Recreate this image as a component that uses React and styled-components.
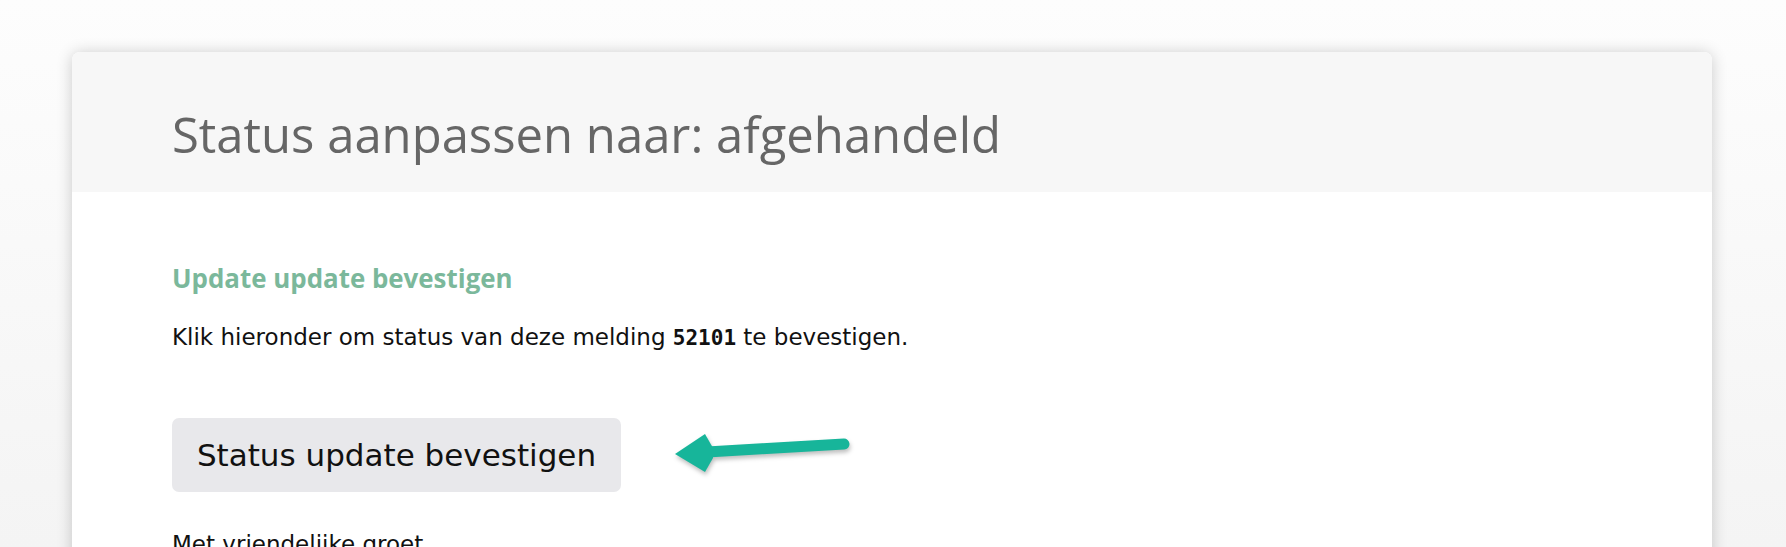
import React from "react";
import styled, { createGlobalStyle } from "styled-components";

const GlobalStyle = createGlobalStyle`
  html, body {
    margin: 0;
    padding: 0;
    height: 100%;
    overflow: hidden;
  }
  body {
    background: linear-gradient(to bottom, #fdfdfd 0%, #f4f4f4 100%);
    font-family: "DejaVu Sans", Arial, sans-serif;
  }
`;

const Page = styled.div`
  padding: 52px 74px 0 72px;
`;

const Card = styled.div`
  width: 1640px;
  background: #fff;
  border-radius: 8px;
  box-shadow: 0 1px 16px rgba(0, 0, 0, 0.2);
  overflow: hidden;
`;

const Header = styled.div`
  height: 140px;
  background: #f7f7f7;
  padding: 0 100px;
  display: flex;
  align-items: center;
  box-sizing: border-box;
`;

const Title = styled.h1`
  margin: 24px 0 0;
  font-family: "Open Sans", sans-serif;
  font-weight: 400;
  font-size: 49px;
  color: #666666;
`;

const Content = styled.div`
  padding: 70px 100px 40px;
`;

const SubTitle = styled.h2`
  margin: 0;
  font-family: "Open Sans", sans-serif;
  font-weight: 700;
  font-size: 25.9px;
  line-height: 32px;
  color: #7bb89b;
`;

const Text = styled.p`
  margin: ${(p) => p.top || 0}px 0 0;
  font-family: "DejaVu Sans", "Liberation Sans", sans-serif;
  font-size: 23px;
  line-height: 32px;
  color: #111;
`;

const Code = styled.code`
  font-family: "DejaVu Sans Mono", monospace;
  font-weight: 700;
  font-size: 21px;
`;

const ActionRow = styled.div`
  display: flex;
  align-items: center;
  margin-top: 64px;
`;

const Button = styled.button`
  width: 449px;
  height: 74px;
  padding: 0;
  border: none;
  border-radius: 7px;
  background: #e8e8eb;
  font-family: "DejaVu Sans", "Liberation Sans", sans-serif;
  font-size: 31px;
  color: #111;
  cursor: pointer;
`;

const Arrow = styled.svg`
  margin-left: 46px;
  margin-top: -4px;
  filter: drop-shadow(1px 3px 2px rgba(0, 0, 0, 0.25));
`;

export default function App() {
  return (
    <>
      <GlobalStyle />
      <Page>
        <Card>
          <Header>
            <Title>Status aanpassen naar: afgehandeld</Title>
          </Header>
          <Content>
            <SubTitle>Update update bevestigen</SubTitle>
            <Text top={27}>
              Klik hieronder om status van deze melding <Code>52101</Code> te
              bevestigen.
            </Text>
            <ActionRow>
              <Button>Status update bevestigen</Button>
              <Arrow width="195" height="55" viewBox="0 0 195 55">
                <line
                  x1="40"
                  y1="26"
                  x2="177"
                  y2="18"
                  stroke="#17b59a"
                  strokeWidth="11"
                  strokeLinecap="round"
                />
                <polygon points="8,28 38,8 46,22 46,32 38,46" fill="#17b59a" />
              </Arrow>
            </ActionRow>
            <Text top={36}>Met vriendelijke groet</Text>
          </Content>
        </Card>
      </Page>
    </>
  );
}
